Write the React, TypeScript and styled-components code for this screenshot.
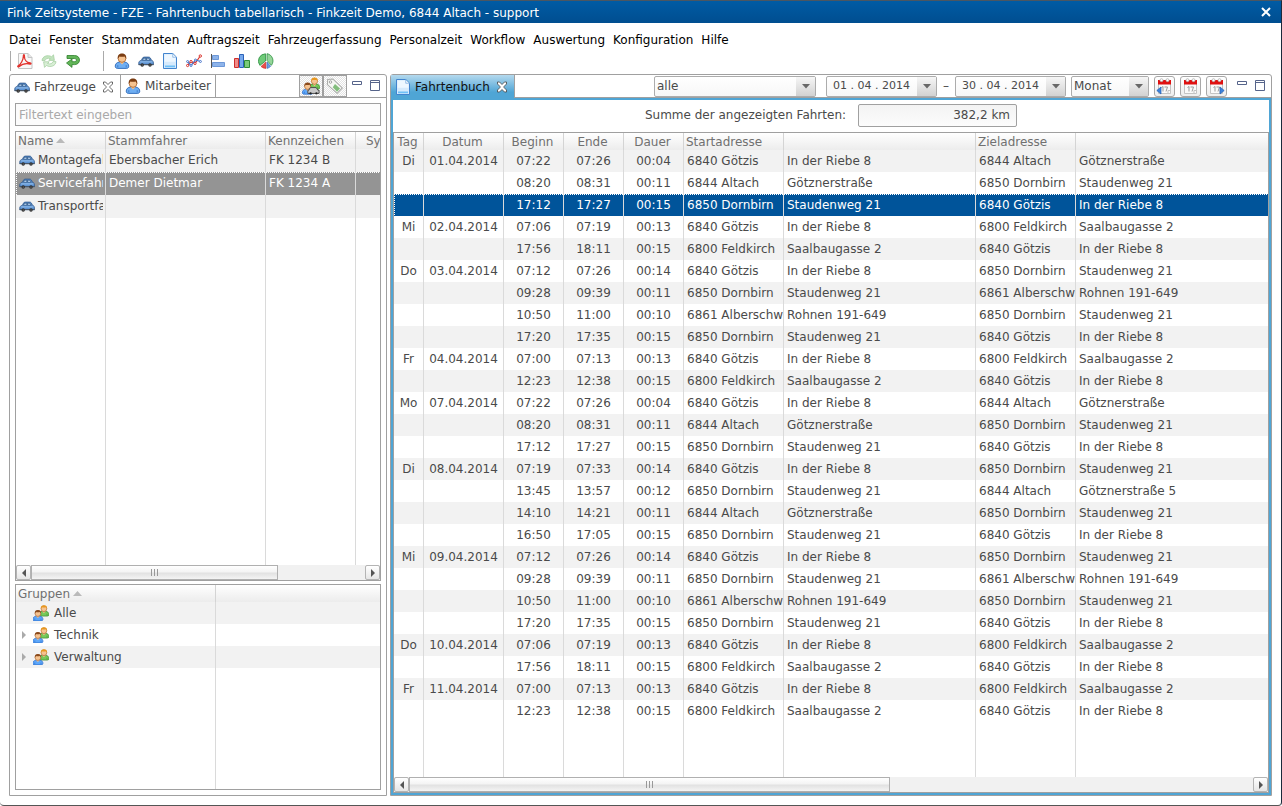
import React from "react";
import styled, { createGlobalStyle, css } from "styled-components";

const BORDER = "#a0a0a0";
const ACTIVE = "#4fa5d5";

const GlobalStyle = createGlobalStyle`
  * { box-sizing: border-box; }
  html, body, #root { height: 100%; }
  body {
    margin: 0;
    background: #fff;
    font-family: "DejaVu Sans", Verdana, sans-serif;
    font-size: 12px;
    line-height: 16px;
    color: #4a4a4a;
  }
  button, input, select { font: inherit; color: inherit; margin: 0; }
  svg { display: block; flex: none; }
`;

const Window = styled.div`
  display: flex;
  flex-direction: column;
  min-height: 100vh;
  height: 100%;
  border-top: 1px solid #4b5661;
  border-right: 1px solid #1c2a3c;
  border-bottom: 1px solid #555;
  border-radius: 0 0 4px 4px;
  overflow: hidden;
`;

const TitleBar = styled.header`
  display: flex;
  align-items: center;
  justify-content: space-between;
  flex: none;
  height: 22px;
  padding: 0 10px 0 7px;
  background: linear-gradient(#005ba4, #004e90);
  color: #fff;
`;

const Title = styled.h1`
  margin: 0;
  padding-top: 2px;
  font-size: 12px;
  font-weight: normal;
`;

const PlainButton = styled.button`
  display: flex;
  align-items: center;
  justify-content: center;
  padding: 0;
  border: 0;
  background: none;
`;

const MenuBar = styled.nav`
  display: flex;
  flex: none;
  gap: 8px;
  padding: 9px 9px 0;
  color: #000;
`;

const ToolBar = styled.div`
  display: flex;
  align-items: center;
  flex: none;
  gap: 8px;
  height: 26px;
  padding: 0 10px;
`;

const ToolGroup = styled.div<{ $lead: number }>`
  display: flex;
  align-items: center;
  gap: 8px;
  height: 20px;
  padding: 0 14px 0 ${(p) => p.$lead}px;
  border-left: 1px solid #aaa;
`;

const Workspace = styled.main`
  display: flex;
  flex: 1;
  gap: 3px;
  min-height: 0;
  padding: 0 9px 9px;
`;

const Pane = styled.section<{ $width?: string }>`
  display: flex;
  flex-direction: column;
  min-width: 0;
  flex: ${(p) => (p.$width ? `0 0 ${p.$width}` : "1")};
  border: 1px solid ${BORDER};
  border-radius: 3px 3px 0 0;
`;

const TabStrip = styled.div`
  display: flex;
  align-items: stretch;
  flex: none;
  height: 23px;
`;

const Tab = styled.div<{ $kind: "open" | "rest" | "focus" }>`
  display: flex;
  align-items: center;
  gap: 6px;
  padding: 0 6px 0 4px;
  border-right: 1px solid ${BORDER};
  ${(p) =>
    p.$kind === "rest" &&
    css`
      padding-right: 4px;
      border-bottom: 1px solid ${BORDER};
    `}
  ${(p) =>
    p.$kind === "focus" &&
    css`
      color: #111;
      background: linear-gradient(#b4d9ee, ${ACTIVE} 75%);
    `}
`;

const TabLabel = styled.button`
  display: flex;
  align-items: center;
  gap: 4px;
  padding: 0;
  border: 0;
  background: none;
`;

const TabTools = styled.div`
  display: flex;
  align-items: center;
  justify-content: flex-end;
  flex: 1;
  gap: 5px;
  border-bottom: 1px solid ${BORDER};
`;

const ToggleGroup = styled.div`
  display: flex;
`;

const ToggleButton = styled.button`
  display: flex;
  align-items: center;
  justify-content: center;
  width: 24px;
  height: 22px;
  padding: 0;
  border: 1px solid ${BORDER};
  background: repeating-conic-gradient(#e3e3e3 0 25%, #fff 0 50%) 0 0 / 2px 2px;
`;

const PaneControls = styled.div`
  display: flex;
  gap: 8px;
  padding: 0 6px 2px 0;
`;

const PaneBody = styled.div`
  display: flex;
  flex-direction: column;
  flex: 1;
  gap: 3px;
  min-height: 0;
  padding: 5px;
`;

const FilterInput = styled.input`
  width: 100%;
  height: 23px;
  margin-bottom: 2px;
  padding: 0 3px;
  border: 1px solid ${BORDER};
  background: #fcfcfc;
  &::placeholder { color: #a9a9a9; opacity: 1; }
`;

const GridBox = styled.div<{ $height?: string }>`
  display: flex;
  flex-direction: column;
  min-height: 0;
  flex: ${(p) => (p.$height ? `0 0 ${p.$height}` : "1")};
  border: 1px solid ${BORDER};
`;

const TableArea = styled.div`
  flex: 1;
  min-height: 0;
  overflow: hidden;
`;

const Table = styled.table`
  width: 100%;
  height: 100%;
  table-layout: fixed;
  border-collapse: separate;
  border-spacing: 0;
`;

const HeadCell = styled.th<{ $center?: boolean; $indent?: boolean }>`
  height: 17px;
  padding: 0 4px 0 ${(p) => (p.$indent ? "10px" : "2px")};
  border-right: 1px solid #d4d4d4;
  background: linear-gradient(#fff, #ececec);
  color: #707070;
  font-weight: normal;
  text-align: ${(p) => (p.$center ? "center" : "left")};
  white-space: nowrap;
  overflow: hidden;
  &:last-child { border-right: 0; }
`;

const Cell = styled.td<{ $center?: boolean; $raised?: boolean }>`
  padding: 0 0 ${(p) => (p.$raised ? "2px" : "0")} ${(p) => (p.$center ? "0" : "3px")};
  border-right: 1px solid #dadada;
  text-align: ${(p) => (p.$center ? "center" : "left")};
  white-space: nowrap;
  overflow: hidden;
  &:last-child { border-right: 0; }
`;

const Row = styled.tr<{ $height: number; $tone: "plain" | "shade" | "grey" | "blue" }>`
  height: ${(p) => p.$height}px;
  background: ${(p) => ({ plain: "#fff", shade: "#f2f2f2", grey: "#949494", blue: "#00549a" })[p.$tone]};
  ${(p) =>
    (p.$tone === "grey" || p.$tone === "blue") &&
    css`
      color: #fff;
      background-image:
        repeating-linear-gradient(90deg, #fff 0 1px, transparent 1px 2px),
        repeating-linear-gradient(#fff 0 1px, transparent 1px 2px);
      background-size: 100% 1px, 1px 100%;
      background-repeat: no-repeat;
    `}
`;

const NameCell = styled.div<{ $inset?: boolean }>`
  display: flex;
  align-items: center;
  gap: ${(p) => (p.$inset ? "5px" : "3px")};
  margin-right: 2px;
  overflow: hidden;
`;

const Expander = styled.span`
  display: flex;
  justify-content: center;
  width: 9px;
`;

const Heading = styled.span`
  display: inline-flex;
  align-items: center;
  gap: 3px;
`;

const ScrollBar = styled.div`
  display: flex;
  flex: none;
  height: 15px;
  background: #f1f1f1;
`;

const ScrollButton = styled.button`
  display: flex;
  align-items: center;
  justify-content: center;
  width: 15px;
  padding: 0;
  border: 1px solid #b4b4b4;
  border-radius: 2px;
  background: linear-gradient(#fff, #e6e6e6);
`;

const ScrollTrack = styled.div`
  display: flex;
  flex: 1;
`;

const ScrollThumb = styled.div<{ $share: number }>`
  display: flex;
  align-items: center;
  justify-content: center;
  width: ${(p) => p.$share}%;
  border: 1px solid #b0b0b0;
  background: linear-gradient(#fff, #f4f4f4 45%, #e2e2e2 55%, #f4f4f4);
`;

const Filters = styled.div`
  display: flex;
  align-items: center;
  gap: 5px;
  padding-right: 5px;
`;

const Combo = styled.div<{ $width: number }>`
  display: grid;
  grid-template-columns: 1fr 19px;
  width: ${(p) => p.$width}px;
  height: 21px;
  border: 1px solid #acacac;
  border-radius: 2px;
  background: linear-gradient(#fff, #f7f7f7);
  & > * { grid-row: 1; }
`;

const ComboSelect = styled.select`
  grid-column: 1 / 3;
  width: 100%;
  padding: 0 2px;
  border: 0;
  background: none;
  appearance: none;
  z-index: 1;
`;

const DateInput = styled.input`
  grid-column: 1;
  width: 100%;
  min-width: 0;
  padding: 0 0 0 6px;
  border: 0;
  background: none;
  font-size: 11px;
`;

const ComboArrow = styled.button`
  grid-column: 2;
  display: flex;
  align-items: center;
  justify-content: center;
  padding: 0;
  border: 0;
  background: linear-gradient(#f6f6f6, #d2d2d2);
`;

const CalendarButton = styled.button`
  display: flex;
  align-items: center;
  justify-content: center;
  width: 21px;
  height: 21px;
  padding: 0;
  border: 1px solid #a8a8a8;
  border-radius: 3px;
  background: linear-gradient(#fff, #eee);
`;

const FocusBody = styled.div`
  display: flex;
  flex-direction: column;
  flex: 1;
  min-height: 0;
  border: 2px solid ${ACTIVE};
`;

const Summary = styled.label`
  display: flex;
  align-items: center;
  justify-content: center;
  flex: none;
  gap: 12px;
  height: 32px;
  padding-bottom: 2px;
`;

const SummaryValue = styled.input`
  width: 159px;
  height: 23px;
  padding: 0 6px;
  border: 1px solid ${BORDER};
  border-radius: 2px;
  background: linear-gradient(#f3f3f3, #fcfcfc);
  text-align: right;
`;

const Icon = ({ children, size = 16 }: { children: React.ReactNode; size?: number }) => (
  <svg width={size} height={size} viewBox="0 0 16 16" aria-hidden="true">{children}</svg>
);

const CarIcon = () => (
  <Icon>
    <path d="M.8 10C.8 8.400 1.600 7.900 3.200 7.500L4.600 5C5 4.300 5.500 4.100 6.400 4.100h4c1 0 1.500.3 2 1l1.200 2.300c1.300.4 1.800 1 1.800 2.400v1.900H.8z" fill="#5d93d3" stroke="#2d5689" strokeWidth=".8" />
    <path d="M5.600 5.200h2.200v2.100H4.400zM8.600 5.200h2.200l1.400 2.100H8.600z" fill="#b9d6f5" stroke="#24466f" strokeWidth=".6" />
    <path d="M1.600 8.900h13" stroke="#9cc4ee" strokeWidth=".9" />
    <path d="M.6 11.600h15" stroke="#4a5563" strokeWidth="1" />
    <circle cx="4.200" cy="12" r="1.700" fill="#2c2c2c" />
    <circle cx="12" cy="12" r="1.700" fill="#2c2c2c" />
    <circle cx="4.200" cy="12" r=".6" fill="#999" />
    <circle cx="12" cy="12" r=".6" fill="#999" />
  </Icon>
);

const PersonShape = ({ body = "#6faef2", line = "#2a66b8", hair = "#7a3c12" }) => (
  <>
    <path d="M1.300 13.800C.9 11 2.800 9.300 5.600 9h4.800c2.800.3 4.700 2 4.300 4.800-.2 1.200-1.200 1.600-2.400 1.600H3.700c-1.200 0-2.200-.4-2.400-1.600z" fill={body} stroke={line} strokeWidth=".9" />
    <path d="M3.800 14.400v-2.200M12.200 14.400v-2.200" stroke={line} strokeWidth=".7" />
    <path d="M5.600 9 8 11.600 10.400 9z" fill="#f3bf8c" />
    <circle cx="8" cy="5.400" r="3.900" fill="#f6c390" stroke="#a8622c" strokeWidth=".8" />
    <path d="M3.800 5.800C3.400 2 5.400.6 8 .6s4.700 1.400 4.200 5.200c-.8-.9-1-1.900-1.400-2.400-2 .6-4 .5-5.600 0-.3.800-.6 1.600-1.400 2.400z" fill={hair} />
  </>
);
const PersonIcon = () => <Icon><PersonShape /></Icon>;

const GroupIcon = () => (
  <Icon>
    <g transform="translate(5 -.3) scale(.74)"><PersonShape body="#77c95a" line="#33872a" hair="#e8981f" /></g>
    <g transform="translate(-1 4.500) scale(.74)"><PersonShape body="#5fa8fa" line="#1f62c4" hair="#8a4a1c" /></g>
  </Icon>
);

const DriverIcon = () => (
  <Icon size={18}>
    <g transform="translate(5.500 0) scale(.7)"><PersonShape body="#77c95a" line="#33872a" hair="#e8981f" /></g>
    <g transform="translate(-.6 4.500) scale(.7)"><PersonShape body="#5fa8fa" line="#1f62c4" hair="#8a4a1c" /></g>
    <path d="M6 11.800l1.400-2.400h5.200l1.600 2.400h1v2.800H5.200v-2.800z" fill="#c9c9c9" stroke="#444" strokeWidth=".8" />
    <circle cx="7.600" cy="14.500" r="1" fill="#222" /><circle cx="12.800" cy="14.500" r="1" fill="#222" />
  </Icon>
);

const TagIcon = () => (
  <Icon size={18}>
    <path d="M1.500 2.200 6 1.700l8.500 8-4.600 4.800L1.200 6.800z" fill="#f6f8f4" stroke="#a9aaa8" strokeWidth=".9" />
    <path d="M8 6.300l4.500 3.900-2.700 2.800L6 9z" fill="#82bd7c" />
    <circle cx="4" cy="4.500" r="1.100" fill="#fff" stroke="#999" strokeWidth=".8" />
  </Icon>
);

const PageIcon = () => (
  <Icon>
    <path d="M1.500.5h9.300l3.700 3.700v11.300h-13z" fill="#d6eafc" stroke="#4284ce" />
    <path d="M2.500 1.500h7.800v3.200h3.200v4H2.500z" fill="#eef7ff" />
    <path d="M10.800.7v3.500h3.500z" fill="#fff" stroke="#74a8de" strokeWidth=".7" />
    <path d="M3 12.500h10v1.800H3z" fill="#6fc0f7" />
  </Icon>
);

const PdfIcon = () => (
  <Icon>
    <path d="M1.500.5h9.500l4 4v11H1.500z" fill="#f8f8f8" stroke="#c4c4c4" />
    <path d="M11 .5v4h4" fill="#e5e5e5" stroke="#c4c4c4" />
    <path d="M.8 13.200C3.400 12 6.600 6.800 6.400 2.600c0-1.200 1-1.200 1 0-.2 4.200 2.400 7 5.800 7.400 1.200.2 1 1.100-.1 1-4.500-.9-8.200 0-10.900 2.500-.8.700-1.700.2-1.400-.3z" fill="none" stroke="#e2322d" strokeWidth="1.300" />
  </Icon>
);

const RefreshIcon = () => (
  <Icon>
    <path d="M1 7.600C1.200 3.400 6.500 1.300 10.600 3.700l1.900-1.900.9 5.600H7.800l1.600-1.700C6.700 4.700 4.600 5.600 4 7.600z" fill="#c3e4bf" stroke="#9fcb9b" strokeWidth=".7" />
    <path d="M15 8.600c-.2 4.200-5.500 6.300-9.600 3.900l-1.900 1.900-.9-5.600h5.600l-1.600 1.700c2.700 1 4.800.1 5.400-1.900z" fill="#d9efd6" stroke="#9fcb9b" strokeWidth=".7" />
  </Icon>
);

const ReturnIcon = () => (
  <Icon>
    <path d="M2 2.500h7.500c3.200 0 5 2 5 4.500s-1.800 4.600-5 4.600H7v2.800L1.500 10 7 6v2.700h2.300c1.300 0 2.100-.6 2.100-1.600S10.600 5.500 9.300 5.500H2z" fill="#62b558" stroke="#2d7f2b" strokeWidth=".8" />
  </Icon>
);

const LineChartIcon = () => (
  <Icon>
    <path d="M1.500 12.500 5 8.500l4 2 5.300-7.500" fill="none" stroke="#d9332c" strokeWidth="1.200" />
    <path d="M1.500 8.500 5 12.500l4.500-5.500 5 1.500" fill="none" stroke="#4a78cc" strokeWidth="1.200" />
    <g fill="#fff" stroke="#d9332c"><circle cx="1.600" cy="12.500" r="1.100" /><circle cx="5" cy="8.500" r="1.100" /><circle cx="9" cy="10.500" r="1.100" /><circle cx="14.300" cy="3" r="1.200" /></g>
    <g fill="#fff" stroke="#4a78cc"><circle cx="1.600" cy="8.500" r="1" /><circle cx="5" cy="12.500" r="1" /><circle cx="9.500" cy="7" r="1" /><circle cx="14.400" cy="8.500" r="1" /></g>
  </Icon>
);

const BarsIcon = () => (
  <Icon>
    <path d="M1.500 1v14" stroke="#555" />
    <path d="M2.500 2.500h6v4h-6zM2.500 9.500h12v4h-12z" fill="#8eb4ea" stroke="#6d98d8" />
  </Icon>
);

const ColumnsIcon = () => (
  <Icon>
    <path d="M.5 5.500h4v9h-4z" fill="#ef8b88" stroke="#cf2f2d" />
    <path d="M5.500 1.500h4v13h-4z" fill="#76a8ec" stroke="#2c62b8" />
    <path d="M10.500 7.500h5v7h-5z" fill="#7ccb79" stroke="#2f8b36" />
  </Icon>
);

const PieIcon = () => (
  <Icon>
    <path d="M7.500 8V.800a7.200 7.200 0 0 0-5.600 11.600z" fill="#6ecb78" stroke="#2f9142" strokeWidth=".8" />
    <path d="M9 7.500V.700a7.200 7.200 0 0 1 4.400 11.600z" fill="#95d69a" stroke="#2f9142" strokeWidth=".8" />
    <path d="M7.800 9 3 13.500a7 7 0 0 0 5 1.900z" fill="#ea4e48" stroke="#c52c28" strokeWidth=".6" />
    <path d="M9 9l3.700 4.300A7 7 0 0 1 9 15.400z" fill="#6b9ce4" stroke="#2f64b5" strokeWidth=".6" />
  </Icon>
);

const CloseIcon = () => (
  <svg width="12" height="12" viewBox="0 0 12 12" aria-hidden="true">
    <path d="M1.500 1h2L6 3.500 8.500 1h2v2L8 5.500v1L10.500 9v2h-2L6 8.500 3.500 11h-2V9L4 6.500v-1L1.500 3z" fill="#fff" stroke="#444" strokeWidth=".8" />
  </svg>
);

const MinimizeIcon = () => (
  <svg width="10" height="11" viewBox="0 0 10 11" aria-hidden="true"><path d="M.5 1.500h9v3h-9z" fill="#fff" stroke="#56648a" /></svg>
);
const MaximizeIcon = () => (
  <svg width="10" height="11" viewBox="0 0 10 11" aria-hidden="true"><path d="M.5.500h9v10h-9zM.5 2.500h9" fill="#fff" stroke="#56648a" /></svg>
);

const CalendarIcon = ({ arrow }: { arrow?: "left" | "right" }) => (
  <svg width="17" height="17" viewBox="0 0 17 17" aria-hidden="true">
    <path d="M2.500 3.500h12v12h-12z" fill="#fafafa" stroke="#c3c3c3" />
    <path d="M2 2h13v4.500H2z" fill="#e01010" />
    <circle cx="5.500" cy="2.200" r="1.500" fill="#fff" stroke="#999" strokeWidth=".6" />
    <circle cx="11.500" cy="2.200" r="1.500" fill="#fff" stroke="#999" strokeWidth=".6" />
    <path d="M5.500 9.500 7 8.500v5M8.500 9h3L10 13.500" fill="none" stroke="#9b9b9b" />
    <path d="M12 15.500v-3h3" fill="none" stroke="#c3c3c3" />
    {arrow === "left" && <path d="M.8 12.500l4.200-3.500v7z" fill="#3c82dc" stroke="#2460b4" strokeWidth=".7" />}
    {arrow === "right" && <path d="M16.200 12.500 12 9v7z" fill="#3c82dc" stroke="#2460b4" strokeWidth=".7" />}
  </svg>
);

const DownArrow = () => (
  <svg width="8" height="5" viewBox="0 0 8 5" aria-hidden="true"><path d="M0 0h8L4 4.500z" fill="#686868" /></svg>
);
const SortArrow = () => (
  <svg width="9" height="5" viewBox="0 0 9 5" aria-hidden="true"><path d="M0 5h9L4.500 0z" fill="#bababa" /></svg>
);
const SideArrow = ({ left, color = "#555" }: { left?: boolean; color?: string }) => (
  <svg width="4" height="8" viewBox="0 0 4 8" aria-hidden="true"><path d={left ? "M4 0v8L0 4z" : "M0 0v8l4-4z"} fill={color} /></svg>
);
const GripIcon = () => (
  <svg width="8" height="7" viewBox="0 0 8 7" aria-hidden="true"><path d="M.5 0v7M3.500 0v7M6.500 0v7" stroke="#999" /></svg>
);

const HorizontalScroll = ({ share }: { share: number }) => (
  <ScrollBar>
    <ScrollButton aria-label="Nach links"><SideArrow left /></ScrollButton>
    <ScrollTrack><ScrollThumb $share={share}><GripIcon /></ScrollThumb></ScrollTrack>
    <ScrollButton aria-label="Nach rechts"><SideArrow /></ScrollButton>
  </ScrollBar>
);

const WindowControls = () => (
  <PaneControls>
    <PlainButton aria-label="Minimieren"><MinimizeIcon /></PlainButton>
    <PlainButton aria-label="Maximieren"><MaximizeIcon /></PlainButton>
  </PaneControls>
);

const MENU = ["Datei", "Fenster", "Stammdaten", "Auftragszeit", "Fahrzeugerfassung", "Personalzeit", "Workflow", "Auswertung", "Konfiguration", "Hilfe"];

const FILE_TOOLS = [
  { label: "PDF", icon: <PdfIcon /> },
  { label: "Aktualisieren", icon: <RefreshIcon /> },
  { label: "Zurück", icon: <ReturnIcon /> },
];
const VIEW_TOOLS = [
  { label: "Mitarbeiter", icon: <PersonIcon /> },
  { label: "Fahrzeuge", icon: <CarIcon /> },
  { label: "Fahrtenbuch", icon: <PageIcon /> },
  { label: "Verlauf", icon: <LineChartIcon /> },
  { label: "Balken", icon: <BarsIcon /> },
  { label: "Säulen", icon: <ColumnsIcon /> },
  { label: "Torte", icon: <PieIcon /> },
];

const VEHICLES = [
  ["Montagefah", "Ebersbacher Erich", "FK 1234 B"],
  ["Servicefahr", "Demer Dietmar", "FK 1234 A"],
  ["Transportfa", "", ""],
];
const SELECTED_VEHICLE = 1;

const GROUPS = [
  { name: "Alle", expandable: false },
  { name: "Technik", expandable: true },
  { name: "Verwaltung", expandable: true },
];

const GOETZIS = ["6840 Götzis", "In der Riebe 8"];
const ALTACH = ["6844 Altach", "Götznerstraße"];
const ALTACH5 = ["6844 Altach", "Götznerstraße 5"];
const DORNBIRN = ["6850 Dornbirn", "Staudenweg 21"];
const FELDKIRCH = ["6800 Feldkirch", "Saalbaugasse 2"];
const ALBER = ["6861 Alberschw", "Rohnen 191-649"];

type Trip = [string, string, string, string, string, string[], string[]];
const TRIPS: Trip[] = [
  ["Di", "01.04.2014", "07:22", "07:26", "00:04", GOETZIS, ALTACH],
  ["", "", "08:20", "08:31", "00:11", ALTACH, DORNBIRN],
  ["", "", "17:12", "17:27", "00:15", DORNBIRN, GOETZIS],
  ["Mi", "02.04.2014", "07:06", "07:19", "00:13", GOETZIS, FELDKIRCH],
  ["", "", "17:56", "18:11", "00:15", FELDKIRCH, GOETZIS],
  ["Do", "03.04.2014", "07:12", "07:26", "00:14", GOETZIS, DORNBIRN],
  ["", "", "09:28", "09:39", "00:11", DORNBIRN, ALBER],
  ["", "", "10:50", "11:00", "00:10", ALBER, DORNBIRN],
  ["", "", "17:20", "17:35", "00:15", DORNBIRN, GOETZIS],
  ["Fr", "04.04.2014", "07:00", "07:13", "00:13", GOETZIS, FELDKIRCH],
  ["", "", "12:23", "12:38", "00:15", FELDKIRCH, GOETZIS],
  ["Mo", "07.04.2014", "07:22", "07:26", "00:04", GOETZIS, ALTACH],
  ["", "", "08:20", "08:31", "00:11", ALTACH, DORNBIRN],
  ["", "", "17:12", "17:27", "00:15", DORNBIRN, GOETZIS],
  ["Di", "08.04.2014", "07:19", "07:33", "00:14", GOETZIS, DORNBIRN],
  ["", "", "13:45", "13:57", "00:12", DORNBIRN, ALTACH5],
  ["", "", "14:10", "14:21", "00:11", ALTACH, DORNBIRN],
  ["", "", "16:50", "17:05", "00:15", DORNBIRN, GOETZIS],
  ["Mi", "09.04.2014", "07:12", "07:26", "00:14", GOETZIS, DORNBIRN],
  ["", "", "09:28", "09:39", "00:11", DORNBIRN, ALBER],
  ["", "", "10:50", "11:00", "00:10", ALBER, DORNBIRN],
  ["", "", "17:20", "17:35", "00:15", DORNBIRN, GOETZIS],
  ["Do", "10.04.2014", "07:06", "07:19", "00:13", GOETZIS, FELDKIRCH],
  ["", "", "17:56", "18:11", "00:15", FELDKIRCH, GOETZIS],
  ["Fr", "11.04.2014", "07:00", "07:13", "00:13", GOETZIS, FELDKIRCH],
  ["", "", "12:23", "12:38", "00:15", FELDKIRCH, GOETZIS],
];
const SELECTED_TRIP = 2;
const TRIP_COLUMNS = ["Tag", "Datum", "Beginn", "Ende", "Dauer", "Startadresse", "", "Zieladresse", ""];
const TRIP_WIDTHS = [30, 80, 60, 60, 60, 100, 192, 100];

const Columns = ({ widths }: { widths: number[] }) => (
  <colgroup>
    {widths.map((w, i) => <col key={i} width={w} />)}
    <col />
  </colgroup>
);

const FillerRow = ({ count }: { count: number }) => (
  <tr>{Array.from({ length: count }, (_, i) => <Cell key={i} />)}</tr>
);

const VehicleTable = () => (
  <Table>
    <Columns widths={[90, 160, 90]} />
    <thead>
      <tr>
        <HeadCell><Heading>Name <SortArrow /></Heading></HeadCell>
        <HeadCell>Stammfahrer</HeadCell>
        <HeadCell>Kennzeichen</HeadCell>
        <HeadCell $indent>Sy</HeadCell>
      </tr>
    </thead>
    <tbody>
      {VEHICLES.map(([name, driver, plate], i) => (
        <Row key={name} $height={23} $tone={i === SELECTED_VEHICLE ? "grey" : "shade"}>
          <Cell $raised><NameCell><CarIcon />{name}</NameCell></Cell>
          <Cell $raised>{driver}</Cell>
          <Cell $raised>{plate}</Cell>
          <Cell />
        </Row>
      ))}
      <FillerRow count={4} />
    </tbody>
  </Table>
);

const GroupTable = () => (
  <Table>
    <Columns widths={[200]} />
    <thead>
      <tr>
        <HeadCell><Heading>Gruppen <SortArrow /></Heading></HeadCell>
        <HeadCell />
      </tr>
    </thead>
    <tbody>
      {GROUPS.map((g, i) => (
        <Row key={g.name} $height={22} $tone={i % 2 ? "plain" : "shade"}>
          <Cell>
            <NameCell $inset>
              <Expander>{g.expandable && <SideArrow color="#aaa" />}</Expander>
              <GroupIcon />
              {g.name}
            </NameCell>
          </Cell>
          <Cell />
        </Row>
      ))}
      <FillerRow count={2} />
    </tbody>
  </Table>
);

const TripTable = () => (
  <Table>
    <Columns widths={TRIP_WIDTHS} />
    <thead>
      <tr>
        {TRIP_COLUMNS.map((c, i) => <HeadCell key={i} $center={i < 5}>{c}</HeadCell>)}
      </tr>
    </thead>
    <tbody>
      {TRIPS.map((t, i) => (
        <Row key={i} $height={22} $tone={i === SELECTED_TRIP ? "blue" : i % 2 ? "plain" : "shade"}>
          {t.flat().map((value, c) => <Cell key={c} $center={c < 5}>{value}</Cell>)}
        </Row>
      ))}
      <FillerRow count={9} />
    </tbody>
  </Table>
);

const DateField = ({ label, value }: { label: string; value: string }) => (
  <Combo $width={111}>
    <DateInput aria-label={label} defaultValue={value} />
    <ComboArrow aria-label={`${label} wählen`}><DownArrow /></ComboArrow>
  </Combo>
);

const SelectField = ({ label, value, width }: { label: string; value: string; width: number }) => (
  <Combo $width={width}>
    <ComboSelect aria-label={label} defaultValue={value}><option>{value}</option></ComboSelect>
    <ComboArrow as="span"><DownArrow /></ComboArrow>
  </Combo>
);

const DateRange = styled.div`
  display: flex;
  align-items: center;
  gap: 6px;
  padding-left: 5px;
`;

export default function App() {
  return (
    <>
      <GlobalStyle />
      <Window>
        <TitleBar>
          <Title>Fink Zeitsysteme - FZE - Fahrtenbuch tabellarisch - Finkzeit Demo, 6844 Altach - support</Title>
          <PlainButton aria-label="Schließen">
            <svg width="10" height="10" viewBox="0 0 10 10" aria-hidden="true"><path d="M1 1l8 8M9 1 1 9" stroke="#fff" strokeWidth="2" /></svg>
          </PlainButton>
        </TitleBar>
        <MenuBar>
          {MENU.map((m) => <PlainButton key={m}>{m}</PlainButton>)}
        </MenuBar>
        <ToolBar>
          <ToolGroup $lead={6}>
            {FILE_TOOLS.map((t) => <PlainButton key={t.label} aria-label={t.label}>{t.icon}</PlainButton>)}
          </ToolGroup>
          <ToolGroup $lead={10}>
            {VIEW_TOOLS.map((t) => <PlainButton key={t.label} aria-label={t.label}>{t.icon}</PlainButton>)}
          </ToolGroup>
        </ToolBar>
        <Workspace>
          <Pane $width="378px">
            <TabStrip>
              <Tab $kind="open">
                <TabLabel><CarIcon />Fahrzeuge</TabLabel>
                <PlainButton aria-label="Fahrzeuge schließen"><CloseIcon /></PlainButton>
              </Tab>
              <Tab $kind="rest"><TabLabel><PersonIcon />Mitarbeiter</TabLabel></Tab>
              <TabTools>
                <ToggleGroup>
                  <ToggleButton aria-label="Fahrer anzeigen"><DriverIcon /></ToggleButton>
                  <ToggleButton aria-label="Etiketten anzeigen"><TagIcon /></ToggleButton>
                </ToggleGroup>
                <WindowControls />
              </TabTools>
            </TabStrip>
            <PaneBody>
              <FilterInput aria-label="Filter" placeholder="Filtertext eingeben" />
              <GridBox>
                <TableArea><VehicleTable /></TableArea>
                <HorizontalScroll share={74} />
              </GridBox>
              <GridBox $height="206px">
                <TableArea><GroupTable /></TableArea>
              </GridBox>
            </PaneBody>
          </Pane>
          <Pane>
            <TabStrip>
              <Tab $kind="focus">
                <TabLabel><PageIcon />Fahrtenbuch</TabLabel>
                <PlainButton aria-label="Fahrtenbuch schließen"><CloseIcon /></PlainButton>
              </Tab>
              <TabTools>
                <Filters>
                  <SelectField label="Kategorie" value="alle" width={162} />
                  <DateRange>
                    <DateField label="Von" value="01 . 04 . 2014" />
                    <span>–</span>
                    <DateField label="Bis" value="30 . 04 . 2014" />
                  </DateRange>
                  <SelectField label="Zeitraum" value="Monat" width={78} />
                  <CalendarButton aria-label="Zurück"><CalendarIcon arrow="left" /></CalendarButton>
                  <CalendarButton aria-label="Heute"><CalendarIcon /></CalendarButton>
                  <CalendarButton aria-label="Weiter"><CalendarIcon arrow="right" /></CalendarButton>
                </Filters>
                <WindowControls />
              </TabTools>
            </TabStrip>
            <FocusBody>
              <Summary>
                Summe der angezeigten Fahrten:
                <SummaryValue readOnly value="382,2 km" />
              </Summary>
              <GridBox>
                <TableArea><TripTable /></TableArea>
                <HorizontalScroll share={57} />
              </GridBox>
            </FocusBody>
          </Pane>
        </Workspace>
      </Window>
    </>
  );
}
